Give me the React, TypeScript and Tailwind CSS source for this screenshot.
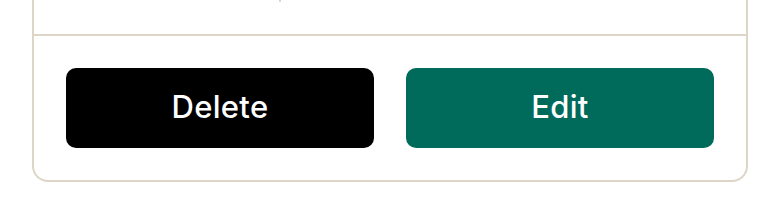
import React from "react";

const App = () => {
  return (
    <div className="min-h-[216px] w-[780px] bg-white px-8 font-['Inter',sans-serif]">
      <div className="flex flex-col rounded-b-2xl border-x-2 border-b-2 border-[#ddd5c5]">
        <div className="flex h-[36px] border-b-2 border-[#ddd5c5]">
          <div className="ml-[245px] h-[2px] w-[2px] bg-[#ddd5c5]" />
        </div>
        <div className="grid grid-cols-2 gap-8 p-8">
          <button className="flex h-20 items-center justify-center rounded-[10px] bg-black pb-[2px] text-[31px] font-medium tracking-[0.01em] text-white">
            Delete
          </button>
          <button className="flex h-20 items-center justify-center rounded-[10px] bg-[#006b5b] pb-[2px] text-[31px] font-medium tracking-[0.01em] text-white">
            Edit
          </button>
        </div>
      </div>
    </div>
  );
};

export default App;
